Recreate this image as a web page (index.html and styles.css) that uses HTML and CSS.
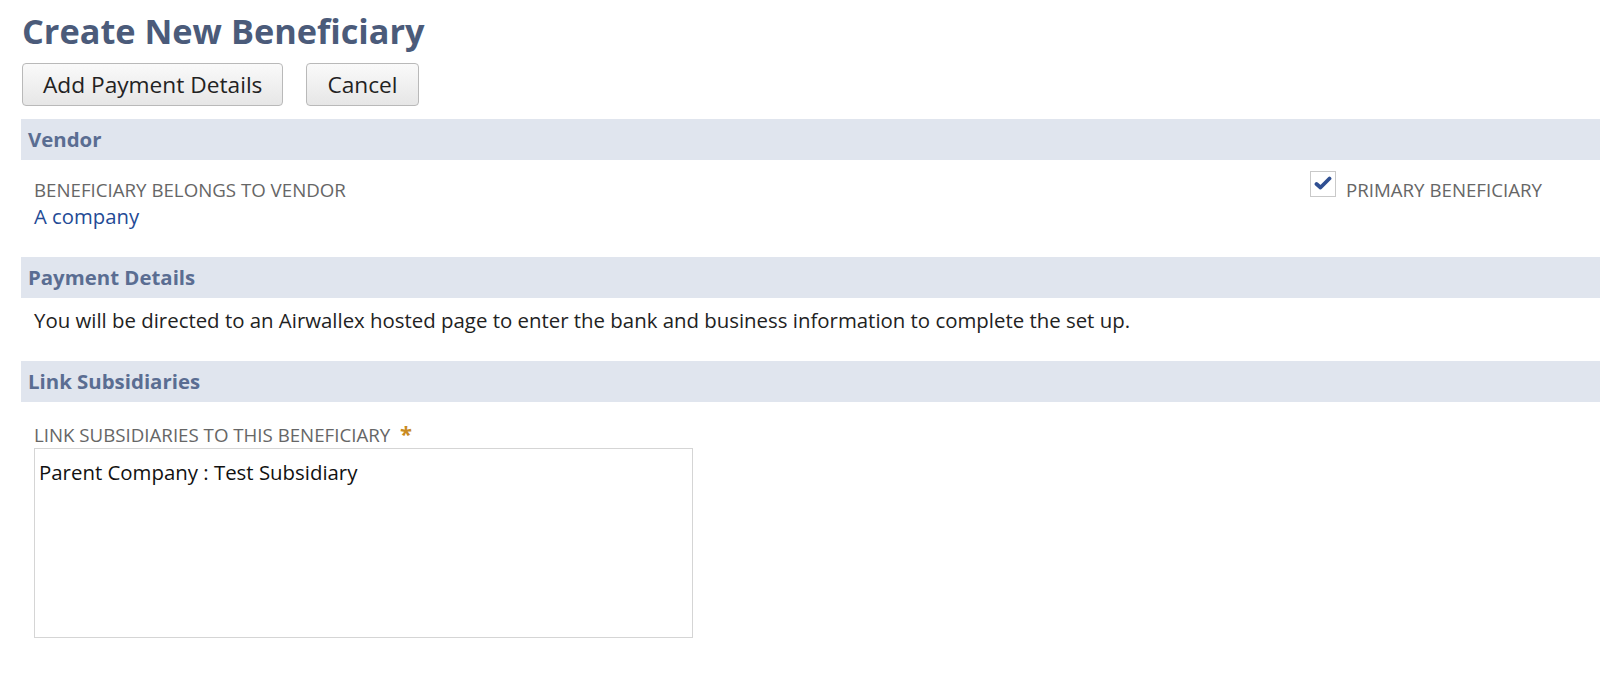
FILE: index.html
```html
<!DOCTYPE html>
<html>
<head>
<meta charset="utf-8">
<link rel="stylesheet" href="styles.css">
</head>
<body>
<div class="page">
  <h1 class="title">Create New Beneficiary</h1>
  <div class="actions">
    <button class="btn">Add Payment Details</button>
    <button class="btn">Cancel</button>
  </div>

  <div class="section-head">Vendor</div>
  <div class="section-body vendor">
    <div class="field">
      <div class="label">BENEFICIARY BELONGS TO VENDOR</div>
      <a class="link" href="#">A company</a>
    </div>
    <label class="check">
      <span class="box">
        <svg width="20" height="16" viewBox="0 0 20 16"><path d="M3.5 8 L7.5 11.5 L16.5 2.5" fill="none" stroke="#2f4f92" stroke-width="3.8" stroke-linecap="round" stroke-linejoin="round"/></svg>
      </span>
      <span class="label">PRIMARY BENEFICIARY</span>
    </label>
  </div>

  <div class="section-head">Payment Details</div>
  <div class="section-body info">
    <p class="text">You will be directed to an Airwallex hosted page to enter the bank and business information to complete the set up.</p>
  </div>

  <div class="section-head">Link Subsidiaries</div>
  <div class="section-body subs">
    <div class="label">LINK SUBSIDIARIES TO THIS BENEFICIARY <span class="req">*</span></div>
    <div class="listbox">
      <div class="option">Parent Company : Test Subsidiary</div>
    </div>
  </div>
</div>
</body>
</html>
```

FILE: styles.css
```css
* { box-sizing: border-box; }
html, body { margin: 0; padding: 0; background: #fff; }
body {
  font-family: "Open Sans", "Liberation Sans", sans-serif;
  color: #222;
}
.page {
  padding: 0 0 0 21px;
}
.title {
  margin: 0;
  padding-top: 7px;
  font-size: 34.3px;
  line-height: 48px;
  font-weight: 700;
  color: #4b5b7a;
  padding-left: 1px;
}
.actions {
  display: flex;
  gap: 23px;
  margin-top: 8px;
  padding-left: 1px;
}
.btn {
  height: 43px;
  padding: 0 20px;
  font-family: "Open Sans", "Liberation Sans", sans-serif;
  font-size: 22.7px;
  color: #222;
  background: linear-gradient(#fafafa, #e6e6e6);
  border: 1px solid #b9b9b9;
  border-radius: 4px;
}
.section-head {
  height: 41px;
  background: #e0e5ee;
  color: #5a6d92;
  font-weight: 700;
  font-size: 20.4px;
  line-height: 41px;
  padding-left: 7px;
}
.actions + .section-head { margin-top: 13px; }
.section-body { padding-left: 13px; }
.label {
  font-size: 18.7px;
  color: #666;
  line-height: 26px;
}
.vendor {
  display: flex;
  justify-content: space-between;
  padding-top: 17px;
  padding-bottom: 28px;
  padding-right: 58px;
}
.link {
  display: block;
  font-size: 20.3px;
  color: #234a95;
  text-decoration: none;
  line-height: 26px;
}
.check {
  display: flex;
  align-items: flex-start;
  gap: 10px;
}
.box {
  width: 26px;
  height: 26px;
  border: 1px solid #c9c9c9;
  background: #fff;
  display: flex;
  align-items: center;
  justify-content: center;
  margin-top: -6px;
}
.info { padding-top: 8px; padding-bottom: 27px; }
.text {
  margin: 0;
  font-size: 20.4px;
  line-height: 28px;
  color: #222;
}
.subs { padding-top: 18px; }
.req { color: #c98b22; font-weight: 700; font-size: 22px; margin-left: 5px; }
.listbox {
  width: 659px;
  height: 190px;
  border: 1px solid #d5d5d5;
  padding: 10px 4px;
}
.option {
  font-size: 20.4px;
  line-height: 26px;
  color: #111;
}
```
